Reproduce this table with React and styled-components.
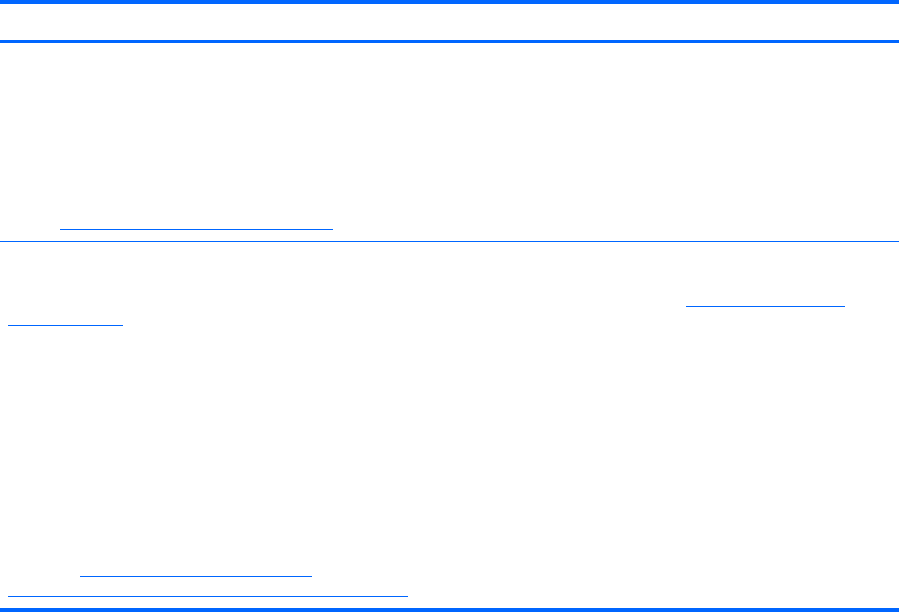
import React from "react";
import styled, { createGlobalStyle } from "styled-components";

const GlobalStyle = createGlobalStyle`
  html, body {
    margin: 0;
    padding: 0;
    background: #fff;
    font-family: "Liberation Sans", Arial, sans-serif;
  }
`;

const BLUE = "#0066ff";

const Page = styled.div`
  width: 899px;
  height: 612px;
  display: flex;
  flex-direction: column;
  background: #fff;
`;

const Header = styled.header`
  height: 36px;
  border-top: 4px solid ${BLUE};
  border-bottom: 3px solid ${BLUE};
`;

const Section = styled.section`
  display: flex;
  flex-direction: column;
`;

/* underlined link whose text is not rendered in the reference */
const Link = styled.a`
  display: block;
  height: 0;
  width: ${(p) => p.$width}px;
  margin-left: ${(p) => p.$indent}px;
  margin-top: ${(p) => p.$top}px;
  border-bottom: 1px solid ${BLUE};
  color: transparent;
  text-decoration: none;
`;

const Rule = styled.hr`
  margin: ${(p) => p.$top}px 0 0;
  border: 0;
  height: 1px;
  background: ${BLUE};
`;

const Footer = styled.footer`
  margin-top: auto;
  height: 4px;
  background: ${BLUE};
`;

export default function App() {
  return (
    <>
      <GlobalStyle />
      <Page>
        <Header />
        <Section>
          <Link href="#" $indent={60} $width={273} $top={186} />
          <Rule $top={11} />
        </Section>
        <Section>
          <Link href="#" $indent={686} $width={159} $top={64} />
          <Link href="#" $indent={8} $width={115} $top={18} />
        </Section>
        <Section>
          <Link href="#" $indent={80} $width={232} $top={250} />
          <Link href="#" $indent={8} $width={400} $top={19} />
        </Section>
        <Footer />
      </Page>
    </>
  );
}
